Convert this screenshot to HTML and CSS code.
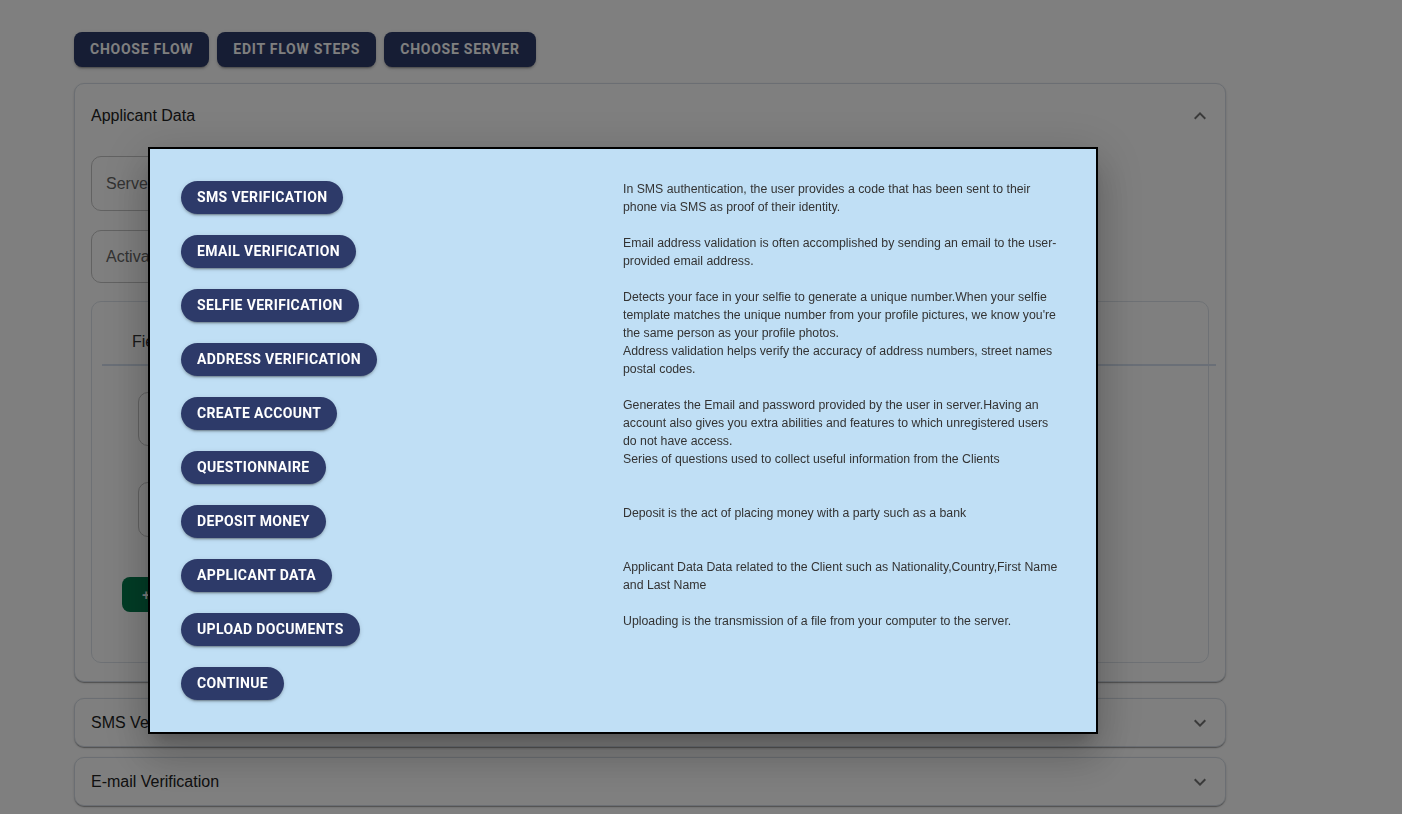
FILE: index.html
```html
<!DOCTYPE html>
<html>
<head>
<meta charset="utf-8">
<link rel="stylesheet" href="styles.css">
</head>
<body>
<div class="page">
  <div class="toolbar">
    <button class="top-btn">Choose Flow</button>
    <button class="top-btn">Edit Flow Steps</button>
    <button class="top-btn">Choose Server</button>
  </div>

  <div class="acc acc-open">
    <div class="acc-head">
      <span class="acc-title">Applicant Data</span>
      <svg class="chev" viewBox="0 0 24 24"><path d="m12 8-6 6 1.41 1.41L12 10.83l4.59 4.58L18 14z"/></svg>
    </div>
    <div class="acc-body">
      <div class="field f1"><span class="field-label">Server</span></div>
      <div class="field f2"><span class="field-label">Activation</span></div>
      <div class="inner">
        <div class="tabs"><span class="tab">Fields</span></div>
        <div class="inner-fields">
          <div class="field small s1"></div>
          <div class="field small s2"></div>
        </div>
        <button class="add-btn">+ Add</button>
      </div>
    </div>
  </div>

  <div class="acc">
    <div class="acc-head collapsed">
      <span class="acc-title">SMS Verification</span>
      <svg class="chev" viewBox="0 0 24 24"><path d="M16.59 8.59 12 13.17 7.41 8.59 6 10l6 6 6-6z"/></svg>
    </div>
  </div>
  <div class="acc">
    <div class="acc-head collapsed">
      <span class="acc-title">E-mail Verification</span>
      <svg class="chev" viewBox="0 0 24 24"><path d="M16.59 8.59 12 13.17 7.41 8.59 6 10l6 6 6-6z"/></svg>
    </div>
  </div>
</div>

<div class="backdrop"></div>

<div class="modal">
  <div class="modal-body">
    <div class="col-btns">
      <button class="pill">SMS Verification</button>
      <button class="pill">Email Verification</button>
      <button class="pill">Selfie Verification</button>
      <button class="pill">Address Verification</button>
      <button class="pill">Create Account</button>
      <button class="pill">Questionnaire</button>
      <button class="pill">Deposit Money</button>
      <button class="pill">Applicant Data</button>
      <button class="pill">Upload Documents</button>
      <button class="pill">Continue</button>
    </div>
    <div class="col-desc">
      <p>In SMS authentication, the user provides a code that has been sent to their phone via SMS as proof of their identity.</p>
      <p>Email address validation is often accomplished by sending an email to the user-provided email address.</p>
      <p>Detects your face in your selfie to generate a unique number.When your selfie template matches the unique number from your profile pictures, we know you're the same person as your profile photos.</p>
      <p>Address validation helps verify the accuracy of address numbers, street names postal codes.</p>
      <p>Generates the Email and password provided by the user in server.Having an account also gives you extra abilities and features to which unregistered users do not have access.</p>
      <p>Series of questions used to collect useful information from the Clients</p>
      <p>Deposit is the act of placing money with a party such as a bank</p>
      <p>Applicant Data Data related to the Client such as Nationality,Country,First Name and Last Name</p>
      <p>Uploading is the transmission of a file from your computer to the server.</p>
    </div>
  </div>
</div>
</body>
</html>
```

FILE: styles.css
```css
* { box-sizing: border-box; }
html, body { margin: 0; padding: 0; background: #fff; }
body { font-family: Roboto, "Liberation Sans", Arial, sans-serif; overflow: hidden; height: 814px; }

.page {
  width: 1152px;
  margin-left: 74px;
  padding-top: 32px;
}

.toolbar { display: flex; gap: 8px; margin-bottom: 16px; }
.top-btn {
  height: 35px;
  padding: 0 16px 2px;
  border: none;
  border-radius: 8px;
  background: #2c3a68;
  color: #fff;
  font-family: Roboto, sans-serif;
  font-weight: 700;
  font-size: 14px;
  letter-spacing: 0.75px;
  text-transform: uppercase;
  box-shadow: 0 3px 1px -2px rgba(0,0,0,.2), 0 2px 2px 0 rgba(0,0,0,.14), 0 1px 5px 0 rgba(0,0,0,.12);
}

.acc {
  border: 1px solid #d6dde6;
  border-radius: 10px;
  background: #fff;
  margin-bottom: 10px;
  box-shadow: 0 2px 1px -1px rgba(0,0,0,.2), 0 1px 1px 0 rgba(0,0,0,.14), 0 1px 3px 0 rgba(0,0,0,.12);
}
.acc-open { margin-bottom: 16px; }
.acc-head {
  height: 64px;
  display: flex;
  align-items: center;
  justify-content: space-between;
  padding: 0 16px;
}
.acc-head.collapsed { height: 47px; }
.acc-title {
  font-family: "Liberation Sans", Arial, sans-serif;
  font-size: 16px;
  color: #212121;
}
.chev { width: 24px; height: 24px; fill: #757575; margin-right: -3px; }

.acc-body { padding: 8px 16px 18px 16px; }
.field {
  border: 1px solid #c4c4c4;
  border-radius: 10px;
  display: flex;
  align-items: center;
  padding: 0 14px;
  width: 820px;
}
.f1 { height: 55px; margin-bottom: 19px; }
.f2 { height: 53px; margin-bottom: 18px; }
.field-label { color: #666; font-family: "Liberation Sans", Arial, sans-serif; font-size: 16px; }

.inner {
  border: 1px solid #dde3ea;
  border-radius: 10px;
  height: 362px;
  padding: 0 0 0 10px;
}
.tabs {
  height: 64px;
  border-bottom: 2px solid #d4dfee;
  margin-right: -8px;
  display: flex;
  align-items: center;
  padding-left: 30px;
  padding-top: 18px;
}
.tab { font-family: "Liberation Sans", Arial, sans-serif; font-size: 16px; color: #333; }
.inner-fields { padding: 26px 16px 0 36px; }
.field.small { width: 760px; }
.s1 { height: 54px; margin-bottom: 36px; }
.s2 { height: 55px; margin-bottom: 40px; }
.add-btn {
  margin-left: 20px;
  height: 35px;
  padding: 0 20px;
  border: none;
  border-radius: 8px;
  background: #047a4c;
  color: #fff;
  font-weight: 700;
  font-size: 14px;
  text-transform: uppercase;
}

.backdrop {
  position: fixed;
  inset: 0;
  background: rgba(0,0,0,0.5);
}

.modal {
  position: fixed;
  left: 148px;
  top: 147px;
  width: 950px;
  height: 587px;
  background: #c0dff5;
  border: 2px solid #000;
  box-shadow: 0 11px 15px -7px rgba(0,0,0,.2), 0 24px 38px 3px rgba(0,0,0,.14), 0 9px 46px 8px rgba(0,0,0,.12);
}
.modal-body {
  display: grid;
  grid-template-columns: 441px 441px;
  padding: 32px 32px 0 31px;
}
.col-btns {
  display: flex;
  flex-direction: column;
  align-items: flex-start;
  gap: 21px;
}
.pill {
  height: 33px;
  padding: 0 16px 1px;
  border: none;
  border-radius: 17px;
  background: #2d3a69;
  color: #fff;
  font-family: Roboto, sans-serif;
  font-weight: 700;
  font-size: 14px;
  letter-spacing: 0.35px;
  text-transform: uppercase;
  box-shadow: 0 3px 1px -2px rgba(0,0,0,.2), 0 2px 2px 0 rgba(0,0,0,.14), 0 1px 5px 0 rgba(0,0,0,.12);
}
.col-desc { margin-top: -1px; padding-left: 1px; width: 439px; }
.col-desc p {
  margin: 0;
  min-height: 54px;
  font-family: "Liberation Sans", Arial, sans-serif;
  font-size: 12.3px;
  line-height: 18px;
  color: #333;
}
```
